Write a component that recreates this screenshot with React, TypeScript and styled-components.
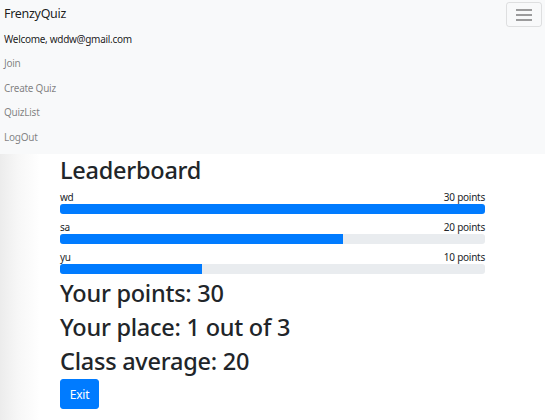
import React from "react";
import styled, { createGlobalStyle } from "styled-components";

const Global = createGlobalStyle`
  html, body { margin: 0; padding: 0; }
  body {
    font-family: "Noto Sans", "Open Sans", sans-serif;
    color: #212529;
    background: linear-gradient(to right, #ececec 0px, #f7f7f7 18px, #ffffff 40px);
    min-height: 420px;
  }
`;

const Navbar = styled.nav`
  background: #f8f9fa;
  padding: 0 4px 5px 4px;
  display: flex;
  flex-direction: column;
`;

const BrandRow = styled.div`
  display: flex;
  justify-content: space-between;
  align-items: flex-start;
  height: 26px;
`;

const Brand = styled.a`
  font-size: 12.5px;
  letter-spacing: -0.3px;
  color: rgba(0, 0, 0, 0.9);
  text-decoration: none;
  line-height: 27px;
`;

const Toggler = styled.button`
  width: 36px;
  height: 25px;
  margin-top: 2px;
  border: 1px solid rgba(0, 0, 0, 0.1);
  border-radius: 3px;
  background: transparent;
  display: flex;
  align-items: center;
  justify-content: center;
  padding: 0;
  margin-right: -1px;
`;

const NavText = styled.div`
  font-size: 10px;
  letter-spacing: -0.3px;
  color: rgba(0, 0, 0, 0.9);
  line-height: 24px;
  margin-top: 1px;
`;

const NavLink = styled.a`
  font-size: 10px;
  letter-spacing: -0.25px;
  color: rgba(0, 0, 0, 0.5);
  text-decoration: none;
  line-height: 24.5px;
`;

const Main = styled.main`
  margin-left: 60px;
  width: 425px;
  display: flex;
  flex-direction: column;
`;

const Title = styled.h2`
  font-size: 23.5px;
  letter-spacing: -0.25px;
  font-weight: 500;
  margin: 1px 0 5px;
  line-height: 30px;
`;

const Entry = styled.div`
  display: flex;
  flex-direction: column;
  margin-bottom: 6px;
  &:last-of-type {
    margin-bottom: 2px;
  }
`;

const EntryLabels = styled.div`
  display: flex;
  justify-content: space-between;
  font-size: 10px;
  letter-spacing: -0.25px;
  line-height: 14px;
`;

const Track = styled.div`
  height: 10px;
  background: #e9ecef;
  border-radius: 3px;
  overflow: hidden;
  display: flex;
`;

const Fill = styled.div`
  background: #007bff;
  height: 100%;
`;

const Stat = styled.h2`
  font-size: 23.5px;
  letter-spacing: -0.25px;
  font-weight: 500;
  margin: 0;
  line-height: 34px;
`;

const ExitButton = styled.button`
  align-self: flex-start;
  background: #007bff;
  color: #fff;
  border: 1px solid #007bff;
  border-radius: 3px;
  font-family: inherit;
  font-size: 12px;
  letter-spacing: -0.2px;
  width: 39px;
  height: 30px;
  padding: 0;
  margin-top: 1px;
`;

const entries = [
  { name: "wd", points: 30 },
  { name: "sa", points: 20 },
  { name: "yu", points: 10 },
];

export default function App() {
  const max = 30;
  return (
    <>
      <Global />
      <Navbar>
        <BrandRow>
          <Brand href="#">FrenzyQuiz</Brand>
          <Toggler aria-label="Toggle navigation">
            <svg width="18" height="14" viewBox="0 0 18 14">
              <path d="M1 2h16M1 7h16M1 12h16" stroke="rgba(0,0,0,0.5)" strokeWidth="1.4" />
            </svg>
          </Toggler>
        </BrandRow>
        <NavText>Welcome, wddw@gmail.com</NavText>
        <NavLink href="#">Join</NavLink>
        <NavLink href="#">Create Quiz</NavLink>
        <NavLink href="#">QuizList</NavLink>
        <NavLink href="#">LogOut</NavLink>
      </Navbar>
      <Main>
        <Title>Leaderboard</Title>
        {entries.map((e) => (
          <Entry key={e.name}>
            <EntryLabels>
              <span>{e.name}</span>
              <span>{e.points} points</span>
            </EntryLabels>
            <Track>
              <Fill style={{ width: `${(e.points / max) * 100}%` }} />
            </Track>
          </Entry>
        ))}
        <Stat>Your points: 30</Stat>
        <Stat>Your place: 1 out of 3</Stat>
        <Stat>Class average: 20</Stat>
        <ExitButton>Exit</ExitButton>
      </Main>
    </>
  );
}
